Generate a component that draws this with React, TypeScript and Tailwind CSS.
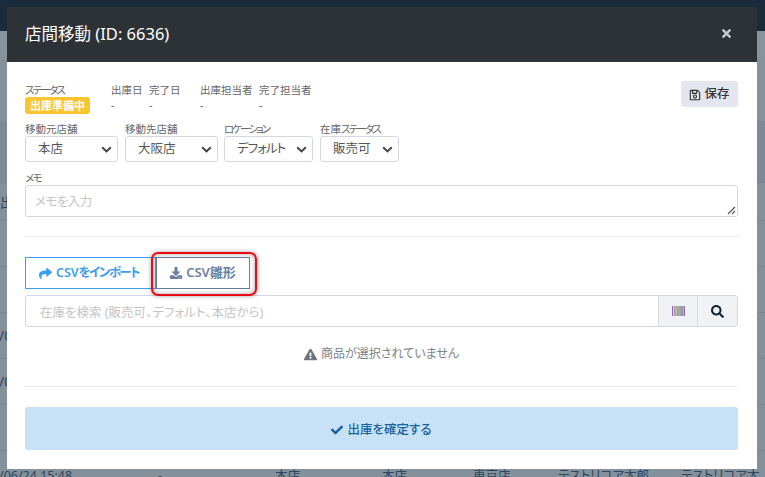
import { FaCheck, FaDownload, FaExclamationTriangle, FaRegSave, FaSearch, FaShare, FaTimes } from 'react-icons/fa';
import type { ReactNode } from 'react';

const barcodeColors = ['#a85c9c', '#d8d8e0', '#6a8fc0', '#a0a0a0', '#c8b070', '#7a70b0', '#70a890', '#b08080', '#909090', '#6a7f9a', '#b8b8c8', '#8070a0'];

function ArrowSelect({ value, className, textClassName }: { value: string; className: string; textClassName?: string }) {
  return (
    <div className={`flex h-[26px] items-center justify-between rounded-[3px] border border-[#d3d8e4] bg-white pl-3 pr-[4px] ${className}`}>
      <span className={`whitespace-nowrap text-[12.5px] leading-none text-[#555] ${textClassName ?? ''}`}>{value}</span>
      <svg width="11" height="7" viewBox="0 0 11 7" className="mr-[1px] shrink-0">
        <path d="M1.2 1.2 5.5 5.4 9.8 1.2" fill="none" stroke="#444" strokeWidth="2" />
      </svg>
    </div>
  );
}

function Field({ label, className, children }: { label: ReactNode; className?: string; children: ReactNode }) {
  return (
    <div className={className}>
      <div className="whitespace-nowrap text-[10.5px] leading-[13px] text-[#666]">{label}</div>
      {children}
    </div>
  );
}

function BackgroundRows() {
  return (
    <div className="flex flex-col">
      <div className="h-[31px] bg-[#1a2c3c]" />
      <div className="h-[22px] bg-[#87939d]" />
      <div className="h-[68px] bg-[#85919b]" />
      <div className="h-[62px] border-b border-[#7a868f] bg-[#7d8a95]" />
      <div className="flex h-[38px] items-center border-b border-[#7a868f] bg-[#84909a] text-[14px] text-[#2f4660]">
        <span>出</span>
      </div>
      {['', '', '/0', '/0', ''].map((text, i) => (
        <div key={i} className="flex h-[46px] items-center border-b border-[#7a868f] bg-[#84909a] text-[14px] text-[#2f4660]">
          <span className="-ml-[1px]">{text}</span>
        </div>
      ))}
      <div className="relative h-[26px] bg-[#84909a] text-[12.5px] leading-[18px] text-[#2f4660]">
        <span className="absolute -left-[1px] top-[16px]">/06/24 15:48</span>
        <span className="absolute left-[158px] top-[16px]">-</span>
        <span className="absolute left-[275px] top-[16px]">本店</span>
        <span className="absolute left-[382px] top-[16px]">本店</span>
        <span className="absolute left-[473px] top-[16px]">東京店</span>
        <span className="absolute left-[558px] top-[16px]">テストリコア太郎</span>
        <span className="absolute left-[681px] top-[16px]">テストリコア太郎</span>
      </div>
    </div>
  );
}

export default function App() {
  return (
    <div className="relative h-[477px] w-[765px] overflow-hidden font-['Noto_Sans','Noto_Sans_CJK_JP',sans-serif] [font-feature-settings:'palt']">
      <BackgroundRows />

      {/* モーダル */}
      <div className="absolute left-[7px] top-[7px] flex h-[462px] w-[750px] flex-col bg-white">
        <div className="flex h-[55px] items-center justify-between bg-[#2d3236] pl-[18px] pr-[24px] text-white">
          <h1 className="text-[16.5px] font-normal leading-none">店間移動 (ID: 6636)</h1>
          <FaTimes className="-mt-[2px] text-[13px] text-[#c8cacc]" />
        </div>

        <div className="flex flex-1 flex-col pl-[18px] pr-[19px] pt-[19px]">
          <div className="flex h-[33px] items-start justify-between">
            <div className="mt-[3px] flex">
              <Field label={<span className="tracking-[-1.8px]">ステータス</span>} className="w-[86px]">
                <span className="block h-[17px] w-[65px] rounded-[3px] bg-[#fbc531] text-center text-[11px] font-bold leading-[17px] text-white">
                  出庫準備中
                </span>
              </Field>
              <Field label="出庫日" className="w-[38px]">
                <div className="text-[10.5px] leading-[16px] text-[#666]">-</div>
              </Field>
              <Field label="完了日" className="w-[51px]">
                <div className="text-[10.5px] leading-[16px] text-[#666]">-</div>
              </Field>
              <Field label="出庫担当者" className="w-[59px]">
                <div className="text-[10.5px] leading-[16px] text-[#666]">-</div>
              </Field>
              <Field label="完了担当者" className="w-[59px]">
                <div className="text-[10.5px] leading-[16px] text-[#666]">-</div>
              </Field>
            </div>
            <button className="flex h-[26px] w-[57px] items-center justify-center gap-[3px] rounded-[3px] bg-[#e3e6ef] pt-[1px] text-[12.5px] font-medium text-[#333]">
              <FaRegSave className="text-[12px]" />
              保存
            </button>
          </div>

          <div className="mt-[9px] flex gap-[7px]">
            <Field label="移動元店舗">
              <ArrowSelect value="本店" className="w-[93px]" />
            </Field>
            <Field label="移動先店舗">
              <ArrowSelect value="大阪店" className="w-[93px]" />
            </Field>
            <Field label={<span className="tracking-[-2px]">ロケーション</span>} className="-ml-[1px]">
              <ArrowSelect value="デフォルト" className="w-[89px]" textClassName="tracking-[-1px]" />
            </Field>
            <Field
              label={
                <>
                  在庫<span className="tracking-[-1.8px]">ステータス</span>
                </>
              }
            >
              <ArrowSelect value="販売可" className="w-[79px]" />
            </Field>
          </div>

          <Field label={<span className="tracking-[-1.5px]">メモ</span>} className="mt-[10px]">
            <div className="relative h-[32px] rounded-[3px] border border-[#d3d8e4] bg-white pl-[9px] text-[12.5px] leading-[31px] tracking-[-0.5px] text-[#c4c4c4]">
              メモを入力
              <svg width="9" height="9" viewBox="0 0 9 9" className="absolute bottom-[1px] right-[1px]">
                <path d="M1 8 8 1M5 8 8 5" stroke="#555" strokeWidth="1.2" />
              </svg>
            </div>
          </Field>

          <div className="mt-[19px] h-px bg-[#e6e8f0]" />

          <div className="mt-[20px] flex items-stretch">
            <button className="flex h-[32px] w-[131px] items-center justify-center gap-[4px] border border-[#3f9ee8] pr-[3px] text-[12.5px] font-semibold text-[#3f9ee8]">
              <FaShare className="text-[13px]" />
              <span>
                CSV<span className="tracking-[-1.5px]">をインポート</span>
              </span>
            </button>
            <button className="relative flex h-[32px] w-[94px] items-center justify-center gap-[4px] border border-[#6a7f9f] text-[13px] font-semibold text-[#6a7f9f]">
              <FaDownload className="text-[12px]" />
              CSV雛形
              {/* 赤枠の注釈 */}
              <span className="absolute -bottom-[8px] -left-[6px] -right-[8px] -top-[6px] rounded-[7px] border-2 border-[#ee0a12] shadow-[0_0_5px_rgba(0,0,0,0.35),inset_0_0_5px_rgba(0,0,0,0.35)]" />
            </button>
          </div>

          <div className="mt-[6px] flex h-[32px] rounded-[3px] border border-[#d3d8e4]">
            <div className="flex-1 pl-[14px] text-[12.5px] leading-[33px] text-[#c4c4c4]">在庫を検索 (販売可、デフォルト、本店から)</div>
            <div className="flex w-[39px] items-center justify-center border-l border-[#d3d8e4] bg-[#f0f2f6]">
              <svg width="13" height="10" viewBox="0 0 13.8 10" preserveAspectRatio="none">
                {barcodeColors.map((color, i) => (
                  <rect key={i} x={i * 1.15} y="0" width="1.15" height="10" fill={color} />
                ))}
              </svg>
            </div>
            <div className="flex w-[40px] items-center justify-center rounded-r-[3px] border-l border-[#d3d8e4] bg-[#f0f2f6]">
              <FaSearch className="text-[13px] text-[#1a2533]" />
            </div>
          </div>

          <div className="mt-[16px] flex h-[20px] items-center justify-center gap-[4px] pt-[2px] text-[12px] text-[#7b7f85]">
            <FaExclamationTriangle className="text-[13px] text-[#6c757d]" />
            商品が選択されていません
          </div>

          <div className="mt-[23px] h-px bg-[#e6e8f0]" />

          <button className="mt-[20px] flex h-[43px] items-center justify-center gap-[4px] rounded-[3px] bg-[#c7e2f7] pt-[3px] text-[12.5px] font-medium text-[#1a5f9e]">
            <FaCheck className="text-[12px]" />
            出庫を確定する
          </button>
        </div>
      </div>
    </div>
  );
}
